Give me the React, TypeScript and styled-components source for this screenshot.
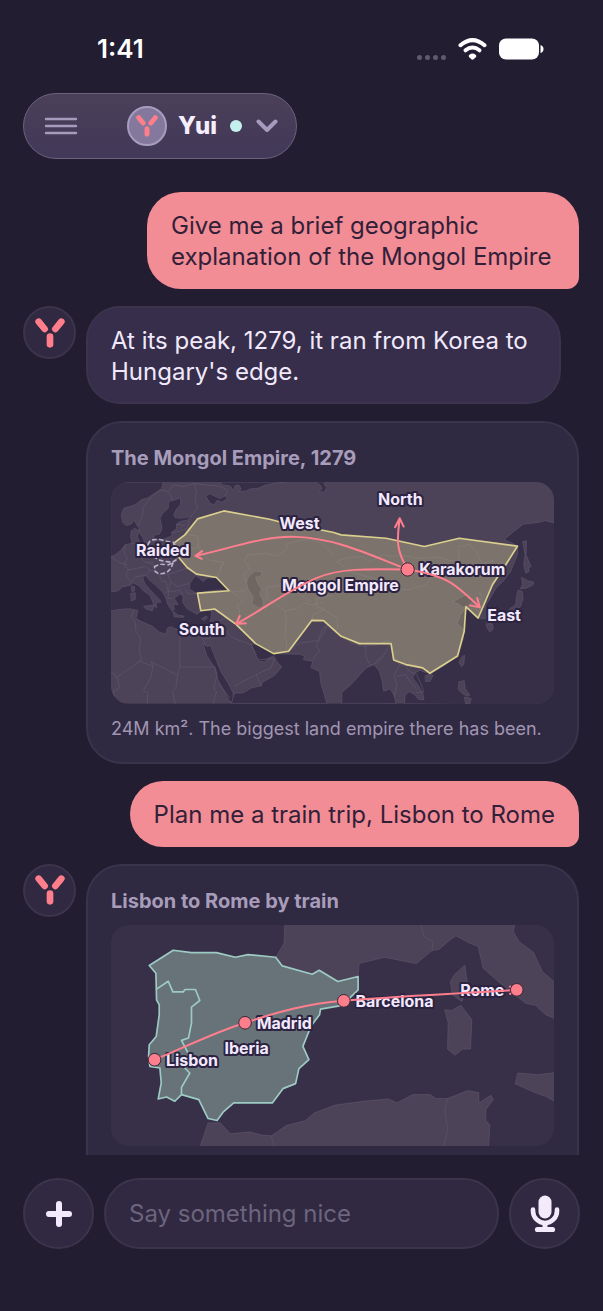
import React from "react";
import styled, { createGlobalStyle } from "styled-components";

const GlobalStyle = createGlobalStyle`
  * { box-sizing: border-box; }
  body { margin: 0; background: #231d32; }
  button, input { font: inherit; }
`;

const Screen = styled.div`
  display: flex;
  flex-direction: column;
  height: 100vh;
  background: #231d32;
  color: #f1e9fb;
  font-family: Inter, "Liberation Sans", sans-serif;
`;

const StatusBar = styled.div`
  display: flex;
  align-items: center;
  justify-content: space-between;
  padding: 34px 59px 0 97px;
  height: 64px;
  color: #fff;
  font-size: 26px;
  line-height: 30px;
  font-weight: 600;
`;

const StatusIcons = styled.div`
  display: flex;
  align-items: center;
  gap: 12px;
`;

const SignalDots = styled.div`
  display: flex;
  gap: 3px;
  padding-top: 16px;
`;

const SignalDot = styled.span`
  width: 5px;
  height: 5px;
  border-radius: 50%;
  background: #5f5a6c;
`;

const Header = styled.header`
  display: flex;
  padding: 29px 23px 33px;
`;

const HeaderPill = styled.div`
  display: flex;
  align-items: center;
  height: 66px;
  padding: 0 18px 0 19px;
  border: 1px solid #6b6280;
  border-radius: 33px;
  background: linear-gradient(#4a4059, #423858);
`;

const IconButton = styled.button`
  display: flex;
  padding: 0;
  border: 0;
  background: none;
  color: #a69bbd;
  cursor: pointer;
`;

const AgentButton = styled.button`
  display: flex;
  align-items: center;
  margin-left: 48px;
  padding: 0;
  border: 0;
  background: none;
  color: #f6edff;
  font-size: 24px;
  line-height: 32px;
  font-weight: 800;
  cursor: pointer;
`;

const AgentName = styled.span`
  margin: 0 13px 0 11px;
`;

const OnlineDot = styled.span`
  width: 12px;
  height: 12px;
  margin-right: 14px;
  border-radius: 50%;
  background: #c4f1ee;
`;

const Avatar = styled.div<{ $size: number; $bright?: boolean }>`
  display: flex;
  flex: none;
  align-items: center;
  justify-content: center;
  width: ${(p) => p.$size}px;
  height: ${(p) => p.$size}px;
  border: 2px solid ${(p) => (p.$bright ? "#a79dc0" : "#3b344b")};
  border-radius: 50%;
  background: ${(p) => (p.$bright ? "#84799c" : "#302941")};
`;

const Chat = styled.main`
  display: flex;
  flex: 1;
  flex-direction: column;
  gap: 17px;
  min-height: 0;
  padding: 0 24px 0 23px;
  overflow-y: auto;
  scrollbar-width: none;
  & > * { flex: none; }
`;

const UserBubble = styled.div<{ $maxWidth: number }>`
  align-self: flex-end;
  max-width: ${(p) => p.$maxWidth}px;
  padding: 18px 24px 17px;
  border-radius: 34px 34px 12px 34px;
  background: #f28d96;
  color: #322038;
  font-size: 24px;
  line-height: 31px;
`;

const AgentTurn = styled.section`
  display: flex;
  align-items: flex-start;
  gap: 10px;
`;

const AgentStack = styled.div`
  display: flex;
  flex: 1;
  flex-direction: column;
  align-items: flex-start;
  gap: 17px;
  min-width: 0;
`;

const AgentBubble = styled.div`
  max-width: 475px;
  padding: 17px 23px 15px;
  border: 2px solid #3b344c;
  border-radius: 34px;
  background: #362e4a;
  font-size: 24px;
  line-height: 31px;
`;

const Card = styled.article<{ $bottom?: number }>`
  width: 100%;
  padding: 21px 23px ${(p) => p.$bottom ?? 20}px;
  border: 2px solid #3a334a;
  border-radius: 36px;
  background: #302942;
`;

const CardTitle = styled.h2`
  margin: 0 0 10px;
  color: #a79dba;
  font-size: 20px;
  line-height: 28px;
  font-weight: 700;
`;

const MapFrame = styled.svg`
  display: block;
  width: 100%;
  height: auto;
  border-radius: 18px;
  background: #383048;
`;

const MapLabel = styled.text`
  fill: #f3e9ff;
  stroke: #2b2340;
  stroke-width: 4px;
  stroke-linejoin: round;
  paint-order: stroke;
  font-size: 16px;
  font-weight: 700;
`;

const Caption = styled.p`
  margin: 11px 0 0;
  color: #a096b2;
  font-size: 18px;
  line-height: 27px;
`;

const Composer = styled.form`
  display: flex;
  gap: 10px;
  padding: 23px 23px 62px;
`;

const RoundButton = styled.button`
  display: flex;
  flex: none;
  align-items: center;
  justify-content: center;
  width: 71px;
  height: 71px;
  padding: 0;
  border: 2px solid #3b344b;
  border-radius: 50%;
  background: #302941;
  color: #f3eafc;
  cursor: pointer;
`;

const MessageInput = styled.input`
  flex: 1;
  min-width: 0;
  height: 71px;
  padding: 0 23px;
  border: 2px solid #3b344b;
  border-radius: 36px;
  background: #302941;
  color: #f1e9fb;
  font-size: 24px;
  &::placeholder { color: #6d647e; opacity: 1; }
`;

const YuiMark = ({ size }: { size: number }) => (
  <svg width={size} height={size} viewBox="0 0 90 90" aria-hidden="true">
    <g fill="none" stroke="#ff7e8b" strokeWidth="20" strokeLinecap="round">
      <path d="M11 11L29 33" />
      <path d="M79 11L61 33" />
      <path d="M45 56V79" />
    </g>
  </svg>
);

/* Map shapes are plotted at three units per map pixel. */
const plot = "scale(0.333333) translate(-33 -21)";

const seas = [
  "M33 21H190L185 42L160 58L145 68L125 74L105 90L72 100L64 118L68 142L78 152L92 148L104 136L110 150L117 158L118 172L130 190L134 206L148 208L158 198L164 180L178 178L186 164L184 145L180 130L188 116L205 100L206 80L228 74L241 68L243 88L230 103L222 118L226 128L244 130L276 125L264 135L240 140L230 148L230 162L218 170L214 184L188 194L164 192L148 200L132 208L118 200L112 184L118 168L104 160L94 168L92 184L96 205L76 210L62 226L46 240L33 246Z",
  "M318 62L330 56L345 64L362 71L378 60L382 72L365 82L352 76L344 89L332 86Z",
  "M370 30L392 33L402 48L406 32L418 30L425 43L412 50L440 48L450 42L476 40L498 30L530 24L560 21H360Z",
  "M645 21L662 30L668 42L656 48L672 52L682 38L672 26L684 21Z",
  "M33 352L55 348L68 336L90 332L100 324L116 332L130 348L150 362L158 380L164 396L171 398L168 383L184 382L170 365L150 345L134 325L128 306L138 302L148 316L168 332L188 352L198 370L204 390L216 408L224 404L219 388L235 390L223 370L240 358L250 365L248 382L262 402L276 410L292 418L303 408L336 407L334 430L325 462L320 480L302 477L278 476L242 469L212 456L203 460L198 479L178 472L158 455L123 440L108 431L114 407L88 402L62 404L33 408Z",
  "M270 344L270 326L286 302L300 310L308 320L324 310L350 308L388 348L350 346L315 352L294 357Z",
  "M440 322L448 303L466 289L486 291L486 302L468 308L476 330L486 342L480 358L490 376L491 396L475 398L456 387L461 366L447 346Z",
  "M310 507L322 516L332 512L346 548L364 592L385 625L400 655L401 687L388 678L354 615L346 582L322 545Z",
  "M395 687L404 656L430 655L456 640L483 634L490 622L524 603L547 577L535 565L522 544L508 550L494 562L479 560L466 538L456 510L468 507L482 516L505 525L522 537L562 538L602 539L616 546L611 555L640 560L634 579L660 590L664 625L682 687Z",
  "M727 687V654L755 630L780 602L800 580L824 570L840 590L848 618L853 650L872 643L884 662L890 687Z",
  "M915 687L918 660L930 652L946 660L957 674L974 676L970 655L955 630L940 610L946 596L962 587L980 594L992 597L1036 572L1066 550L1080 530L1092 492L1095 466L1074 446L1084 420L1097 404L1112 404L1134 430L1160 433L1165 414L1158 394L1178 362L1192 338L1210 322L1235 290L1255 240L1256 216L1238 204L1215 194L1244 170L1272 148L1322 142L1338 137L1370 145V692Z",
  "M1060 382L1084 368L1100 360L1112 374L1132 372L1115 384L1108 395L1090 397L1078 388Z",
];

const islands = [
  "M96 334L104 336L103 349L96 350Z",
  "M93 356L106 354L106 374L95 378Z",
  "M132 395L164 390L157 408L139 403Z",
  "M220 410L235 422L252 424L252 428L224 426Z",
  "M306 432L318 424L324 428L314 437Z",
  "M1272 200L1282 198L1281 240L1296 276L1288 278L1290 290L1280 295L1274 270L1278 240Z",
  "M1268 308L1286 318L1304 322L1302 330L1282 340L1264 342L1270 330Z",
  "M1258 346L1270 350L1272 372L1264 396L1246 415L1226 424L1212 438L1190 440L1172 447L1160 443L1196 424L1216 420L1232 402L1250 390L1252 366Z",
  "M1162 448L1180 448L1182 464L1172 472L1164 460Z",
  "M1090 545L1096 542L1094 568L1087 577L1080 564Z",
  "M978 604L994 597L1002 603L992 620L980 621Z",
  "M1080 622L1095 618L1098 642L1112 662L1105 665L1088 656L1078 646Z",
  "M1096 668L1116 672L1112 687H1100Z",
];

const borders =
  "M115 152L128 120L130 98L150 70L180 45L205 50L222 30L250 35M205 50L218 72M250 35L282 26L290 50L286 80L294 98L280 118L272 126M282 26L320 30L360 34L384 46L374 66M268 135L264 160L244 168L215 174M230 148L256 152M264 160L276 170M222 205L218 190M268 180L292 182L296 205L288 222L240 222M76 210L70 230L82 250L72 270L86 285M33 246L56 262L82 270M96 205L132 208L140 236L118 244L136 262L160 262M86 285L78 300L92 322L108 306L140 300L152 286L136 276L86 285M136 262L162 270L165 290L152 286M188 262L222 262L240 240M190 297L204 300L226 292L262 280M176 298L188 320L198 320L205 350L196 355M204 300L212 322L234 336L268 326M212 322L206 350L222 350L240 346L250 358M206 350L204 372L218 370M100 408L94 426L106 442L108 470L122 490L118 530L125 556L48 610L42 596L33 594M123 562L160 575L154 562L233 602L240 577V470M240 577H342M160 575L152 610L130 648L143 655V687M233 602L228 640L218 650L226 687M125 556L118 562M54 610L58 640L40 650L46 687M345 575L352 600L342 640L350 652L340 687M356 625L390 670M303 408L290 418M330 450L350 444L376 430L405 446M332 470L352 462L330 492L316 492M376 430L368 410M350 444L400 490L454 510M454 510L470 540M480 555L524 552L514 580L470 600L404 634M470 600L485 635M300 478L318 510M258 345L266 358L292 356M293 355L340 352M388 348L410 360L430 382L412 390L420 412L416 430L440 455M388 348L420 352L440 345M350 308L360 290L372 262L330 256L308 240L296 210M372 262L360 282M440 322L430 300L450 282L436 260L442 240L500 236L530 244L560 225L562 208L600 196L632 194L666 205L700 240M490 395L522 384L556 408L560 430L556 480L562 510L558 530M522 384L500 370L502 338L540 332L590 350L630 380M556 408L590 402L612 386L640 390L670 384M700 362L650 372L652 396L676 405L640 420L637 437M567 530L600 505L656 498L670 462L684 452M684 452L672 478L650 510L660 530L640 552M675 405L712 430L716 460L704 470L730 490L758 506L798 516M800 514L824 512L866 498M798 514L800 545L812 572L830 566M845 545L830 560M870 510L850 548L828 568M883 556L902 570L884 602L892 630L885 665M902 570L918 572L930 590L952 600L966 632L974 652L950 654M892 605L920 600L932 622L950 640M918 572L946 568L972 582M712 260L740 250L790 245L810 262L850 240L880 245L902 240L950 250L1020 248L1050 256L1080 262L1078 216L1110 208L1130 230L1150 268L1180 256L1178 305M712 260L750 290L840 316L860 338L925 345L980 330L1002 300L1080 280M1140 350L1150 372L1130 378L1142 388M1145 402L1160 394";

const empire =
  "M222 205L255 180L293 132L372 108L510 133L545 142L700 172L725 180L860 190L975 215L1080 190L1255 214L1220 270L1180 330L1137 430L1100 396L1095 470L1075 544L992 596L970 580L920 570L883 556L875 507H780L725 485L672 438L637 437L567 530L522 537L468 507L410 450L345 403L303 408L293 355L388 348L350 308L290 298L262 278L230 240Z";

const routes = [
  "M925 284C810 240 710 190 590 186C490 182 390 222 287 243M307 229L287 243L306 252",
  "M925 284C800 282 720 280 650 310C560 350 490 404 409 448M420 424L409 448L438 446",
  "M925 284C890 225 892 200 901 130M887 157L901 130L913 155",
  "M925 284C1045 302 1070 330 1142 398M1134 370L1142 398L1112 392",
];

const MongolMap = () => (
  <MapFrame viewBox="0 0 444 222" role="img" aria-label="Map of the Mongol Empire">
    <g transform={plot} strokeLinejoin="round" strokeLinecap="round">
      <rect x="33" y="21" width="1332" height="666" fill="#4c4359" />
      <g fill="#372f48" stroke="#5d546a" strokeWidth="2">
        {seas.map((d) => <path key={d} d={d} />)}
      </g>
      <g fill="#4c4359" stroke="#5d546a" strokeWidth="2">
        {islands.map((d) => <path key={d} d={d} />)}
      </g>
      <path d={borders} fill="none" stroke="#61586d" strokeWidth="2" />
      <path d={empire} fill="#ddd095" fillOpacity="0.34" stroke="#dbcf8d" strokeWidth="5" />
      <path
        d="M144 208L152 196L176 193L200 199L222 203L230 220L224 236L234 252L218 262L196 260L176 255L152 240L144 226ZM164 275L180 268L206 270L220 262L214 280L200 294L178 298L166 290Z"
        fill="none" stroke="#b9b0c8" strokeWidth="5" strokeDasharray="10 11"
      />
    </g>
    <g textAnchor="middle">
      <MapLabel x="52" y="74">Raided</MapLabel>
      <MapLabel x="189" y="47">West</MapLabel>
      <MapLabel x="290" y="23">North</MapLabel>
      <MapLabel x="230" y="109">Mongol Empire</MapLabel>
      <MapLabel x="91" y="153">South</MapLabel>
      <MapLabel x="394" y="139">East</MapLabel>
    </g>
    <MapLabel x="309" y="93">Karakorum</MapLabel>
    <g transform={plot}>
      <g fill="none" stroke="#ff7e8e" strokeWidth="6" strokeLinecap="round" strokeLinejoin="round">
        {routes.map((d) => <path key={d} d={d} />)}
      </g>
      <circle cx="925" cy="284" r="20" fill="#ff7e8b" stroke="#3a2538" strokeWidth="3" />
    </g>
  </MapFrame>
);

const coasts = [
  "M556 10V15L553 70L530 110L548 138L638 163L659 151L715 185L776 170L779 131L855 112L951 131L998 92L1020 88L1050 62L1070 47L1112 70L1137 80L1152 145L1215 200L1260 235L1280 250L1310 257L1340 285L1370 297V190L1330 155L1303 97L1260 65L1243 35L1247 10Z",
  "M1097 137L1105 195L1088 245L1060 225L1053 185L1065 165Z",
  "M1037 270L1058 272L1085 256L1118 300L1114 388H1090L1067 407L1045 388L1047 310Z",
  "M1257 460L1315 465L1370 459V547L1340 530L1315 522L1249 493Z",
  "M297 690L310 655L325 610H362L392 643L450 637L487 647L515 649L560 618L617 603L645 580L705 557L790 545L867 538L893 550L940 525H993L1010 537H1045L1105 513L1139 519V550L1175 527L1183 540L1160 570V603L1172 615L1168 690Z",
  "M965 15L975 50L1001 65L998 92",
  "M515 649L527 690M1045 537L1037 570L1045 630L1032 690",
];

const iberia =
  "M148 137L220 91L275 98H350L407 112L445 104L528 112L548 138L638 163L659 151L715 185L776 170V210L745 240L720 258L663 268L660 285L635 318L610 380L628 420L598 447L588 492L550 507L518 550H402L370 578L352 603L325 597L297 540L245 525L225 545L200 532L175 538L184 490L180 445L150 440L146 410L148 375L169 350L178 285V255L170 240L168 160Z";

const cities = [[164, 420], [436, 309], [733, 243], [1253, 210]];

const TrainMap = () => (
  <MapFrame viewBox="0 0 444 222" role="img" aria-label="Map of the train route from Lisbon to Rome">
    <g transform="scale(0.333333) translate(-33 -15)" strokeLinejoin="round" strokeLinecap="round">
      <g stroke="#5d546a" strokeWidth="2">
        {coasts.map((d) => <path key={d} d={d} fill={d.endsWith("Z") ? "#4c4359" : "none"} />)}
      </g>
      <path d={iberia} fill="#677379" stroke="#9dcbc4" strokeWidth="5" />
      <path
        d="M170 208L205 184L219 216H250L256 209H287L300 242L275 262V310L266 355L245 362L265 400L255 445L270 460L245 503V525"
        fill="none" stroke="#9dcbc4" strokeWidth="5"
      />
    </g>
    <MapLabel x="55" y="141">Lisbon</MapLabel>
    <MapLabel x="146" y="104">Madrid</MapLabel>
    <MapLabel x="136" y="129" textAnchor="middle">Iberia</MapLabel>
    <MapLabel x="245" y="82">Barcelona</MapLabel>
    <MapLabel x="350" y="71">Rome</MapLabel>
    <g transform="scale(0.333333) translate(-33 -15)">
      <path
        d="M164 420C260 380 340 340 436 309C530 278 620 252 733 243C900 228 1080 222 1253 210M1233 200L1253 210L1233 222"
        fill="none" stroke="#ff7e8e" strokeWidth="6" strokeLinecap="round"
      />
      {cities.map(([x, y]) => (
        <circle key={x} cx={x} cy={y} r="19" fill="#ff7e8b" stroke="#3a2538" strokeWidth="3" />
      ))}
    </g>
  </MapFrame>
);

export default function App() {
  return (
    <Screen>
      <GlobalStyle />
      <StatusBar>
        <span>1:41</span>
        <StatusIcons>
          <SignalDots>
            <SignalDot /><SignalDot /><SignalDot /><SignalDot />
          </SignalDots>
          <svg width="29" height="22" viewBox="0 0 29 22" aria-hidden="true">
            <g fill="none" stroke="#fff" strokeWidth="4" strokeLinecap="round">
              <path d="M2.5 7.2Q14.500-3 26.500 7.200" />
              <path d="M7.500 12.300Q14.500 6.600 21.500 12.300" />
            </g>
            <path d="M11.200 17Q14.500 14.200 17.800 17Q19 18.200 17.500 19.600L15.600 21.300Q14.500 22.100 13.400 21.300L11.500 19.600Q10 18.200 11.200 17Z" fill="#fff" />
          </svg>
          <svg width="45" height="22" viewBox="0 0 45 22" aria-hidden="true">
            <rect y="0.500" width="40" height="21" rx="7" fill="#fff" />
            <path d="M41.500 7Q44.500 8 44.500 11Q44.500 14 41.500 15Z" fill="#fff" />
          </svg>
        </StatusIcons>
      </StatusBar>

      <Header>
        <HeaderPill>
          <IconButton type="button" aria-label="Menu">
            <svg width="36" height="20" viewBox="0 0 36 20" fill="none" stroke="currentColor" strokeWidth="2.400" strokeLinecap="round">
              <path d="M3 3H33M3 10H33M3 17H33" />
            </svg>
          </IconButton>
          <AgentButton type="button">
            <Avatar as="span" $size={40} $bright><YuiMark size={22} /></Avatar>
            <AgentName>Yui</AgentName>
            <OnlineDot />
            <svg width="22" height="14" viewBox="0 0 22 14" fill="none" stroke="#a69bbd" strokeWidth="4" strokeLinecap="round" strokeLinejoin="round" aria-hidden="true">
              <path d="M2.500 2.500L11 11L19.500 2.500" />
            </svg>
          </AgentButton>
        </HeaderPill>
      </Header>

      <Chat>
        <UserBubble $maxWidth={432}>Give me a brief geographic explanation of the Mongol Empire</UserBubble>
        <AgentTurn>
          <Avatar $size={53}><YuiMark size={30} /></Avatar>
          <AgentStack>
            <AgentBubble>At its peak, 1279, it ran from Korea to Hungary's edge.</AgentBubble>
            <Card>
              <CardTitle>The Mongol Empire, 1279</CardTitle>
              <MongolMap />
              <Caption>24M km². The biggest land empire there has been.</Caption>
            </Card>
          </AgentStack>
        </AgentTurn>
        <UserBubble $maxWidth={480}>Plan me a train trip, Lisbon to Rome</UserBubble>
        <AgentTurn>
          <Avatar $size={53}><YuiMark size={30} /></Avatar>
          <AgentStack>
            <Card $bottom={58}>
              <CardTitle>Lisbon to Rome by train</CardTitle>
              <TrainMap />
            </Card>
          </AgentStack>
        </AgentTurn>
      </Chat>

      <Composer onSubmit={(e) => e.preventDefault()}>
        <RoundButton type="button" aria-label="Add">
          <svg width="28" height="28" viewBox="0 0 28 28" fill="none" stroke="currentColor" strokeWidth="6" strokeLinecap="round">
            <path d="M14 4V24M4 14H24" />
          </svg>
        </RoundButton>
        <MessageInput type="text" aria-label="Message" placeholder="Say something nice" />
        <RoundButton type="button" aria-label="Dictate">
          <svg width="30" height="38" viewBox="0 0 30 38" fill="none" stroke="currentColor" strokeLinecap="round">
            <rect x="8.500" y="0.500" width="13" height="23" rx="6.500" fill="currentColor" stroke="none" />
            <path d="M3 14.500V16A12 12 0 0 0 27 16V14.500" strokeWidth="4.600" />
            <path d="M15 28V34" strokeWidth="5" strokeLinecap="butt" />
            <path d="M7.500 34.500H22.500" strokeWidth="5.200" />
          </svg>
        </RoundButton>
      </Composer>
    </Screen>
  );
}
